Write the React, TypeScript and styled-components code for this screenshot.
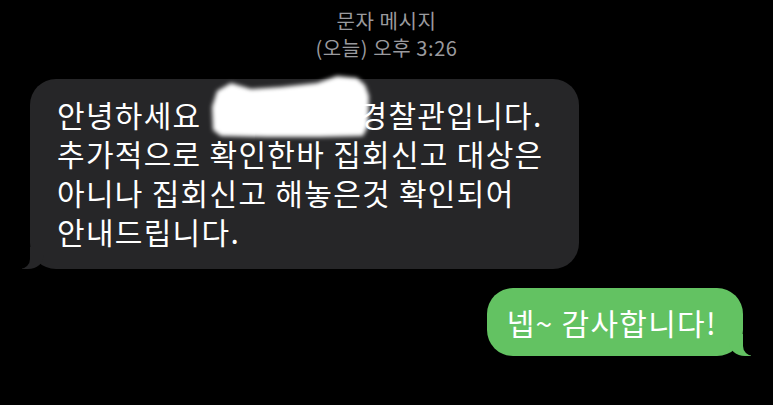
import React from 'react';
import styled, { createGlobalStyle } from 'styled-components';

const GlobalStyle = createGlobalStyle`
  html, body {
    margin: 0;
    padding: 0;
    background: #000;
  }
  body {
    font-family: "Noto Sans CJK KR", "Noto Sans", sans-serif;
    -webkit-font-smoothing: antialiased;
  }
`;

const Screen = styled.main`
  width: 773px;
  height: 405px;
  background: #000;
  display: flex;
  flex-direction: column;
  overflow: hidden;
`;

const Header = styled.header`
  display: flex;
  flex-direction: column;
  align-items: center;
  padding-top: 7px;
  color: #9a9a9e;
  font-size: 20px;
  line-height: 27px;
  letter-spacing: 0.6px;
`;

const Thread = styled.section`
  display: flex;
  flex-direction: column;
  padding: 0 30px 0 30px;
  margin-top: 18px;
  gap: 19px;
`;

const Bubble = styled.div<{ $mine?: boolean }>`
  position: relative;
  align-self: ${({ $mine }) => ($mine ? 'flex-end' : 'flex-start')};
  background: ${({ $mine }) => ($mine ? '#63c262' : '#262628')};
  color: #fff;
  font-size: 30px;
  letter-spacing: 1.3px;
  line-height: 39px;
  border-radius: 26px;
  padding: ${({ $mine }) => ($mine ? '15px 26px 14px 20px' : '16px 36px 18px 27px')};

  &::before {
    content: '';
    position: absolute;
    bottom: 0;
    ${({ $mine }) => ($mine ? 'right: -8px;' : 'left: -8px;')}
    width: 22px;
    height: 22px;
    background: inherit;
    ${({ $mine }) =>
      $mine ? 'border-bottom-left-radius: 16px 14px;' : 'border-bottom-right-radius: 16px 14px;'}
  }

  &::after {
    content: '';
    position: absolute;
    bottom: 0;
    ${({ $mine }) => ($mine ? 'right: -26px;' : 'left: -26px;')}
    width: 26px;
    height: 22px;
    background: #000;
    ${({ $mine }) => ($mine ? 'border-bottom-left-radius: 10px;' : 'border-bottom-right-radius: 10px;')}
  }
`;

const Line = styled.div`
  white-space: nowrap;
  position: relative;
  z-index: 1;
`;

const Hidden = styled.span`
  display: inline-block;
  position: relative;
  width: 150px;
  height: 1em;
  vertical-align: middle;
`;

const Redaction = styled.svg`
  position: absolute;
  left: -3px;
  top: -30px;
  width: 164px;
  height: 66px;
  overflow: visible;
`;

export default function App() {
  return (
    <>
      <GlobalStyle />
      <Screen>
        <Header>
          <span>문자 메시지</span>
          <span>(오늘) 오후 3:26</span>
        </Header>
        <Thread>
          <Bubble>
            <Line>
              안녕하세요{' '}
              <Hidden>
                <Redaction viewBox="0 0 164 66">
                  <defs>
                    <filter id="smudge" x="-20%" y="-20%" width="140%" height="140%">
                      <feGaussianBlur stdDeviation="2" />
                    </filter>
                  </defs>
                  <path
                    d="M10 17 L24 9 L44 15 L74 13 L110 9 L130 2 L150 4 L158 11 L162 22 L161 52 L156 62 L112 63 L60 63 L14 62 L6 56 L5 33 Z"
                    fill="#fff"
                    filter="url(#smudge)"
                  />
                </Redaction>
              </Hidden>
              경찰관입니다.
            </Line>
            <Line>추가적으로 확인한바 집회신고 대상은</Line>
            <Line>아니나 집회신고 해놓은것 확인되어</Line>
            <Line>안내드립니다.</Line>
          </Bubble>
          <Bubble $mine>
            <Line>넵~ 감사합니다!</Line>
          </Bubble>
        </Thread>
      </Screen>
    </>
  );
}
